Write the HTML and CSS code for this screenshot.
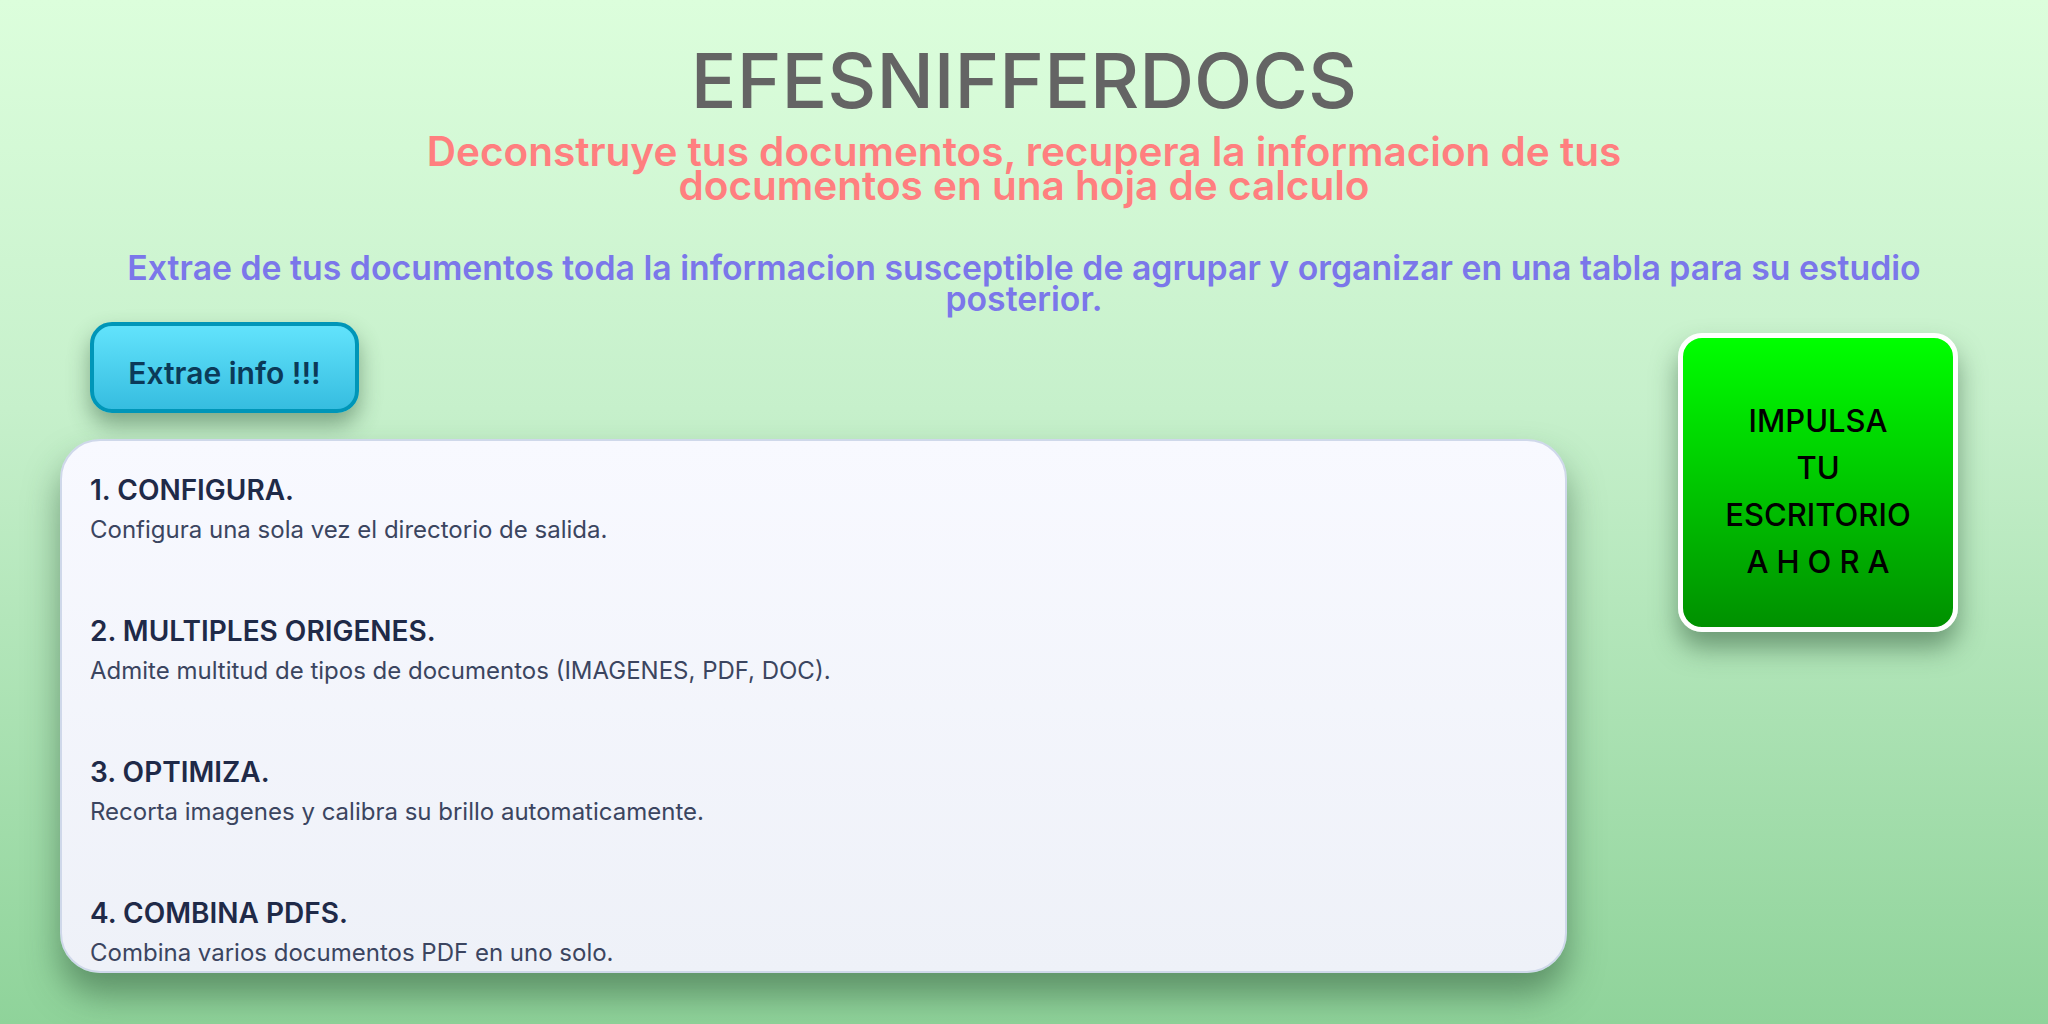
FILE: index.html
```html
<!DOCTYPE html>
<html lang="es">
<head>
<meta charset="utf-8">
<title>EFESNIFFERDOCS</title>
<link rel="stylesheet" href="styles.css">
</head>
<body>
<header class="hero">
  <h1 class="hero-title">EFESNIFFERDOCS</h1>
  <h2 class="hero-subtitle">Deconstruye tus documentos, recupera la informacion de tus documentos en una hoja de calculo</h2>
  <p class="hero-lead">Extrae de tus documentos toda la informacion susceptible de agrupar y organizar en una tabla para su estudio posterior.</p>
</header>
<main class="content">
  <section class="left-col">
    <button class="extract-btn">Extrae info !!!</button>
    <div class="features">
      <div class="feature">
        <h3>1. CONFIGURA.</h3>
        <p>Configura una sola vez el directorio de salida.</p>
      </div>
      <div class="feature">
        <h3>2. MULTIPLES ORIGENES.</h3>
        <p>Admite multitud de tipos de documentos (IMAGENES, PDF, DOC).</p>
      </div>
      <div class="feature">
        <h3>3. OPTIMIZA.</h3>
        <p>Recorta imagenes y calibra su brillo automaticamente.</p>
      </div>
      <div class="feature">
        <h3>4. COMBINA PDFS.</h3>
        <p>Combina varios documentos PDF en uno solo.</p>
      </div>
    </div>
  </section>
  <aside class="promo">
    <span>IMPULSA</span>
    <span>TU</span>
    <span>ESCRITORIO</span>
    <span class="spaced">AHORA</span>
  </aside>
</main>
</body>
</html>
```
FILE: styles.css
```css
* { box-sizing: border-box; }
html, body { margin: 0; padding: 0; }
body {
  width: 2048px;
  height: 1024px;
  overflow: hidden;
  font-family: "Inter", "Lato", sans-serif;
  background: linear-gradient(180deg, #dcfedc 0%, #c6f0cb 40%, #8fd39a 100%);
}
.hero {
  text-align: center;
  padding: 38px 64px 0;
}
.hero-title {
  margin: 0;
  font-size: 76px;
  line-height: 84px;
  font-weight: 500;
  color: #646464;
}
.hero-subtitle {
  margin: 13px auto 0;
  max-width: 1300px;
  font-size: 40.5px;
  line-height: 34px;
  font-weight: 600;
  color: #ff7f7f;
}
.hero-lead {
  margin: 49px auto 0;
  max-width: 1880px;
  font-size: 33.8px;
  line-height: 31px;
  font-weight: 600;
  color: #7b77ea;
}
.content {
  display: flex;
  justify-content: space-between;
  align-items: flex-start;
  padding: 0 90px 0 60px;
  margin-top: 8px;
}
.left-col {
  width: 1507px;
  display: flex;
  flex-direction: column;
  align-items: flex-start;
}
.extract-btn {
  margin-left: 30px;
  width: 269px;
  height: 91px;
  border: 4px solid #0096b8;
  border-radius: 22px;
  background: linear-gradient(180deg, #62e3fc 0%, #36bde0 100%);
  font-family: inherit;
  font-size: 30px;
  font-weight: 600;
  color: #0b3a58;
  box-shadow: 0 12px 22px rgba(40, 80, 50, 0.45);
  padding: 10px 0 0;
}
.features {
  margin-top: 26px;
  width: 100%;
  height: 534px;
  border: 2px solid #cfd8ea;
  border-radius: 40px;
  background: linear-gradient(180deg, #f8f9ff 0%, #eef1f8 100%);
  box-shadow: 0 22px 34px rgba(40, 80, 50, 0.5);
  padding: 32px 28px 0;
  display: flex;
  flex-direction: column;
  gap: 68px;
}
.feature h3 {
  margin: 0;
  font-size: 28px;
  line-height: 34px;
  font-weight: 600;
  color: #1f2a48;
}
.feature p {
  margin: 7px 0 0;
  font-size: 24px;
  line-height: 32px;
  color: #3b4560;
}
.promo {
  margin-top: 11px;
  width: 280px;
  height: 299px;
  border: 5px solid #ffffff;
  border-radius: 24px;
  background: linear-gradient(180deg, #00ff00 0%, #009000 100%);
  box-shadow: 0 16px 26px rgba(40, 80, 50, 0.5);
  display: flex;
  flex-direction: column;
  align-items: center;
  justify-content: center;
  padding-top: 16px;
  font-size: 31px;
  line-height: 47px;
  font-weight: 500;
  color: #000;
}
.promo .spaced { letter-spacing: 0.26em; margin-right: -0.26em; }
```
